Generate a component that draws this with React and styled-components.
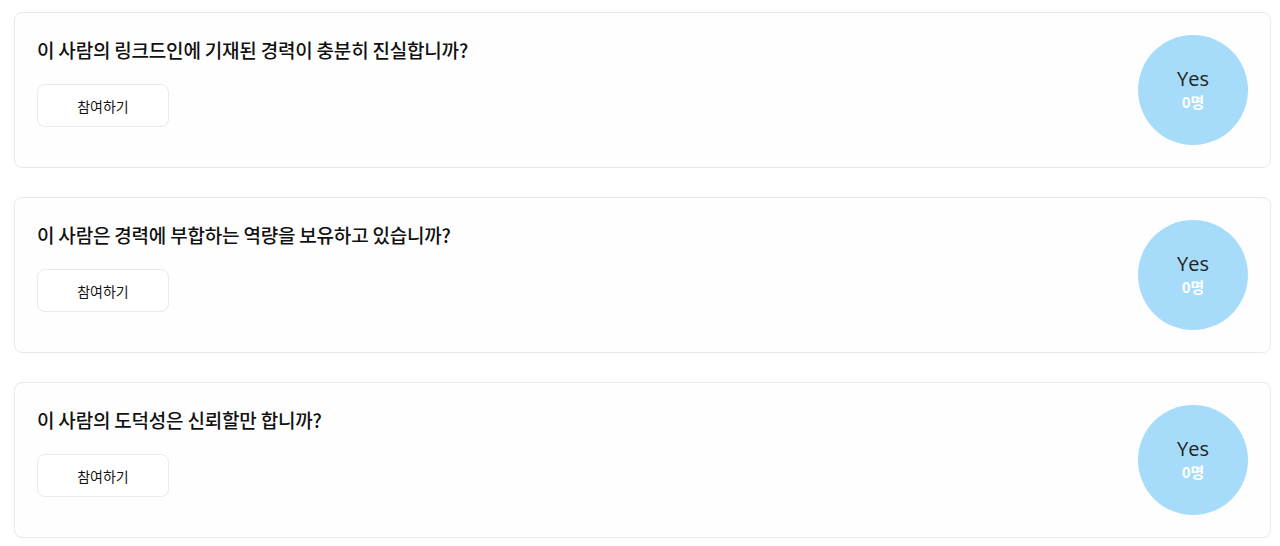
import React from 'react'
import styled, { createGlobalStyle } from 'styled-components'

const GlobalStyle = createGlobalStyle`
  html, body {
    margin: 0;
    padding: 0;
    background: #ffffff;
    font-family: Inter, "Noto Sans CJK KR", sans-serif;
  }
`

const questions = [
  { id: 1, title: '이 사람의 링크드인에 기재된 경력이 충분히 진실합니까?', count: 0 },
  { id: 2, title: '이 사람은 경력에 부합하는 역량을 보유하고 있습니까?', count: 0 },
  { id: 3, title: '이 사람의 도덕성은 신뢰할만 합니까?', count: 0 },
]

const App = () => {
  return (
    <>
      <GlobalStyle />
      <List>
        {questions.map((q) => (
          <Card key={q.id}>
            <Left>
              <Title>{q.title}</Title>
              <JoinButton>참여하기</JoinButton>
            </Left>
            <Circle>
              <Yes>Yes</Yes>
              <Count>{q.count}명</Count>
            </Circle>
          </Card>
        ))}
      </List>
    </>
  )
}

// Style components

const List = styled.div`
  display: flex;
  flex-direction: column;
  gap: 29px;
  padding: 12px 9px 0 14px;
`

const Card = styled.div`
  display: flex;
  align-items: center;
  justify-content: space-between;
  height: 156px;
  box-sizing: border-box;
  padding: 0 22px;
  border: 1px solid #e9e9e9;
  border-radius: 8px;
  background: #fefefe;
`

const Left = styled.div`
  align-self: flex-start;
  display: flex;
  flex-direction: column;
  align-items: flex-start;
  gap: 21px;
  padding-top: 24px;
`

const Title = styled.h2`
  margin: 0;
  font-family: "Noto Sans CJK KR", sans-serif;
  font-size: 19px;
  font-weight: 500;
  line-height: 26px;
  color: #111;
  letter-spacing: -0.2px;
`

const JoinButton = styled.button`
  width: 132px;
  height: 43px;
  border: 1px solid #eaeaea;
  border-radius: 8px;
  background: #fff;
  font-family: "Noto Sans CJK KR", sans-serif;
  font-size: 14px;
  color: #111;
  cursor: pointer;
`

const Circle = styled.div`
  width: 110px;
  height: 110px;
  border-radius: 50%;
  background: #a6dcf9;
  display: flex;
  flex-direction: column;
  align-items: center;
  justify-content: center;
  gap: 2px;
`

const Yes = styled.span`
  font-family: "Open Sans", sans-serif;
  font-size: 20px;
  line-height: 22px;
  color: #222;
`

const Count = styled.span`
  font-family: "Noto Sans CJK KR", sans-serif;
  font-size: 15px;
  font-weight: 700;
  line-height: 20px;
  color: #fff;
`

export default App
